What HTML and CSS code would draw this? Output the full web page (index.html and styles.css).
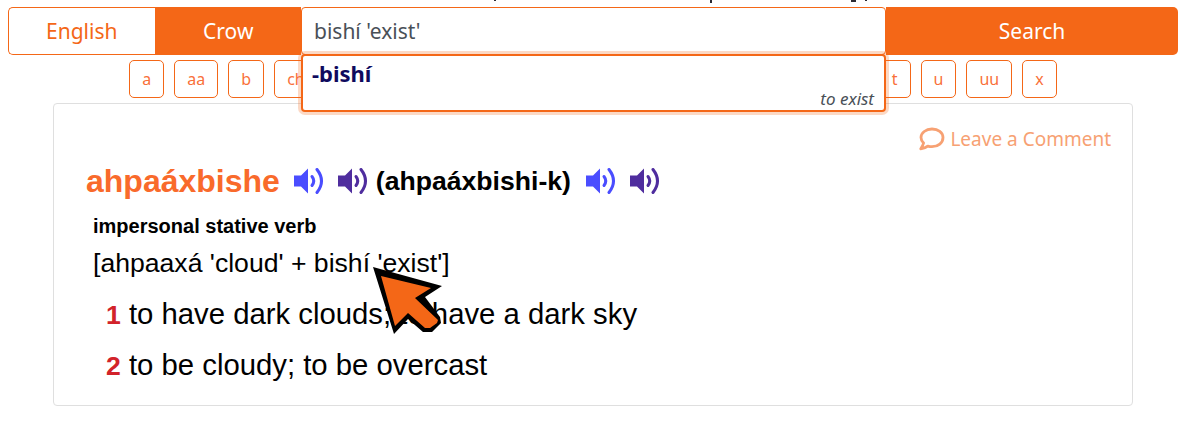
FILE: index.html
```html
<!DOCTYPE html>
<html lang="en">
<head>
  <meta charset="UTF-8" />
  <meta name="viewport" content="width=device-width, initial-scale=1.0"/>
  <title>Crow Dictionary</title>
  <link rel="stylesheet" href="styles.css">
</head>
<body>

<div class="recorte">
  <i class="marca m1"></i><i class="marca m2"></i><i class="marca m3"></i><i class="marca m4"></i>
</div>

<form class="buscador">
  <div class="idiomas">
    <button type="button" class="idioma">English</button>
    <button type="button" class="idioma activo">Crow</button>
  </div>
  <div class="campo">
    <input type="text" class="entrada" value="bishí 'exist'">
    <div class="sugerencias">
      <div class="sug-palabra">-bishí</div>
      <div class="sug-glosa">to exist</div>
    </div>
  </div>
  <button type="button" class="buscar">Search</button>
</form>

<div class="letras">
  <a class="letra">a</a><a class="letra">aa</a><a class="letra">b</a><a class="letra">ch</a>
  <div class="letras-tapadas"></div>
  <a class="letra">t</a><a class="letra">u</a><a class="letra">uu</a><a class="letra">x</a>
</div>

<div class="tarjeta">
  <div class="comentar">
    <svg class="burbuja" viewBox="0 0 26 24"><path d="M13 2C6.900 2 2 5.800 2 10.500c0 2.100 1 4 2.600 5.500C4 18.200 2.800 20.200 1.800 21.800c2.800-.3 5.200-1.300 7-2.700 1.300.4 2.700.6 4.200.6 6.100 0 11-3.900 11-9.200S19.100 2 13 2z" fill="none" stroke="currentColor" stroke-width="2.800" stroke-linejoin="round"/></svg>
    <span>Leave a Comment</span>
  </div>

  <div class="titulo">
    <span class="palabra">ahpaáxbishe</span>
    <svg class="altavoz azul" viewBox="0 0 32 26"><path d="M0 7.500h7l7-7v25l-7-7H0z" fill="currentColor"/><path d="M18 8.500q3.500 4.500 0 9" fill="none" stroke="currentColor" stroke-width="3" stroke-linecap="round"/><path d="M23 1.500q9 11.500 0 23" fill="none" stroke="currentColor" stroke-width="3" stroke-linecap="round"/></svg>
    <svg class="altavoz morado" viewBox="0 0 32 26"><path d="M0 7.500h7l7-7v25l-7-7H0z" fill="currentColor"/><path d="M18 8.500q3.500 4.500 0 9" fill="none" stroke="currentColor" stroke-width="3" stroke-linecap="round"/><path d="M23 1.500q9 11.500 0 23" fill="none" stroke="currentColor" stroke-width="3" stroke-linecap="round"/></svg>
    <span class="forma">(ahpaáxbishi-k)</span>
    <svg class="altavoz azul" viewBox="0 0 32 26"><path d="M0 7.500h7l7-7v25l-7-7H0z" fill="currentColor"/><path d="M18 8.500q3.500 4.500 0 9" fill="none" stroke="currentColor" stroke-width="3" stroke-linecap="round"/><path d="M23 1.500q9 11.500 0 23" fill="none" stroke="currentColor" stroke-width="3" stroke-linecap="round"/></svg>
    <svg class="altavoz morado" viewBox="0 0 32 26"><path d="M0 7.500h7l7-7v25l-7-7H0z" fill="currentColor"/><path d="M18 8.500q3.500 4.500 0 9" fill="none" stroke="currentColor" stroke-width="3" stroke-linecap="round"/><path d="M23 1.500q9 11.500 0 23" fill="none" stroke="currentColor" stroke-width="3" stroke-linecap="round"/></svg>
  </div>

  <div class="categoria">impersonal stative verb</div>
  <div class="etimologia">[ahpaaxá 'cloud' + bishí 'exist']</div>
  <div class="sentido"><b>1</b> to have dark clouds; to have a dark sky</div>
  <div class="sentido"><b>2</b> to be cloudy; to be overcast</div>
</div>

<svg class="cursor" viewBox="0 0 76 74">
  <path d="M3 5 72 24 55 35 70 55 71 61 62 70 53 70 38 57 24 72z" fill="#000"/>
  <path d="M11 14 61 26 45 36 68 58 67 61 60 66 55 66 38 51 25 64z" fill="#f46717"/>
</svg>

</body>
</html>
```

FILE: styles.css
```css
* {
  box-sizing: border-box;
}

body {
  margin: 0;
  height: 421px;
  overflow: hidden;
  position: relative;
  font-family: "Noto Sans", sans-serif;
  background: #fff;
  color: #000;
}

.recorte {
  height: 7px;
  position: relative;
}

.marca {
  position: absolute;
  top: 0;
  width: 2px;
  background: #2b2b33;
}
.m1 { left: 494px; height: 1px; }
.m2 { left: 710px; height: 3px; }
.m3 { left: 851px; height: 2px; width: 5px; }
.m4 { left: 865px; height: 1px; }

.buscador {
  display: flex;
  height: 48px;
  margin: 0 4px 0 8px;
}

.idiomas {
  display: flex;
  width: 293px;
}

.idioma {
  flex: 1;
  font: 21px "Noto Sans", sans-serif;
  color: #f46717;
  background: #fff;
  border: 1px solid #f46717;
  border-right: none;
  border-radius: 5px 0 0 5px;
}

.idioma.activo {
  color: #fff;
  background: #f46717;
  border-radius: 0;
}

.campo {
  width: 585px;
  position: relative;
}

.entrada {
  width: 100%;
  height: 48px;
  padding: 0 12px;
  font: 21px "Noto Sans", sans-serif;
  color: #495057;
  background: #fff;
  border: 1px solid #f46717;
  border-radius: 4px;
}

.sugerencias {
  position: absolute;
  top: 47px;
  left: 0;
  width: 585px;
  height: 58px;
  padding: 2px 10px 0 9px;
  background: #fff;
  border: 2px solid #f46717;
  border-radius: 4px;
  box-shadow: 0 0 0 3px rgba(244, 103, 23, 0.25);
  z-index: 2;
}

.sug-palabra {
  font-size: 22px;
  font-weight: bold;
  line-height: 30px;
  color: #0f0a5e;
}

.sug-glosa {
  font-size: 17px;
  font-style: italic;
  line-height: 20px;
  margin-top: 1px;
  text-align: right;
  color: #495057;
}

.buscar {
  flex: 1;
  font: 21px "Noto Sans", sans-serif;
  color: #fff;
  background: #f46717;
  border: none;
  border-radius: 0 5px 5px 0;
}

.letras {
  display: flex;
  justify-content: center;
  gap: 10px;
  margin: 5px 4px 5px 8px;
}

.letra {
  height: 38px;
  padding: 0 12px;
  font-size: 16px;
  line-height: 36px;
  color: #f9703a;
  border: 1px solid #f46717;
  border-radius: 5px;
}

/* las letras de en medio quedan debajo de la lista de sugerencias */
.letras-tapadas {
  width: 541px;
}

.tarjeta {
  height: 303px;
  margin: 0 49px 0 53px;
  padding: 22px 21px 0 32px;
  border: 1px solid #dfdfdf;
  border-radius: 4px;
  font-family: "Liberation Sans", Arial, sans-serif;
}

.comentar {
  display: flex;
  justify-content: flex-end;
  align-items: center;
  gap: 5px;
  height: 26px;
  font-family: "Noto Sans", sans-serif;
  font-size: 19px;
  color: #f7a173;
}

.burbuja {
  width: 26px;
  height: 24px;
}

.titulo {
  display: flex;
  align-items: center;
  height: 40px;
  margin-top: 9px;
}

.palabra {
  font-size: 32px;
  font-weight: bold;
  color: #f96a2b;
  margin-right: 14px;
}

.altavoz {
  width: 32px;
  height: 26px;
  margin-right: 12px;
}

.azul { color: #4a4dff; }
.morado { color: #4f2d9e; margin-right: 6px; }

.forma {
  font-size: 26.6px;
  font-weight: bold;
  margin-right: 15px;
}

.categoria {
  margin: 12px 0 0 7px;
  font-size: 20px;
  font-weight: bold;
  line-height: 26px;
}

.etimologia {
  margin: 6px 0 0 7px;
  font-size: 26.6px;
  line-height: 36px;
}

.sentido {
  margin: 16px 0 0 20px;
  font-size: 29.3px;
  line-height: 34px;
}

.sentido b {
  font-size: 26.6px;
  color: #d2232a;
}

.cursor {
  position: absolute;
  left: 370px;
  top: 262px;
  width: 76px;
  height: 74px;
}
```
